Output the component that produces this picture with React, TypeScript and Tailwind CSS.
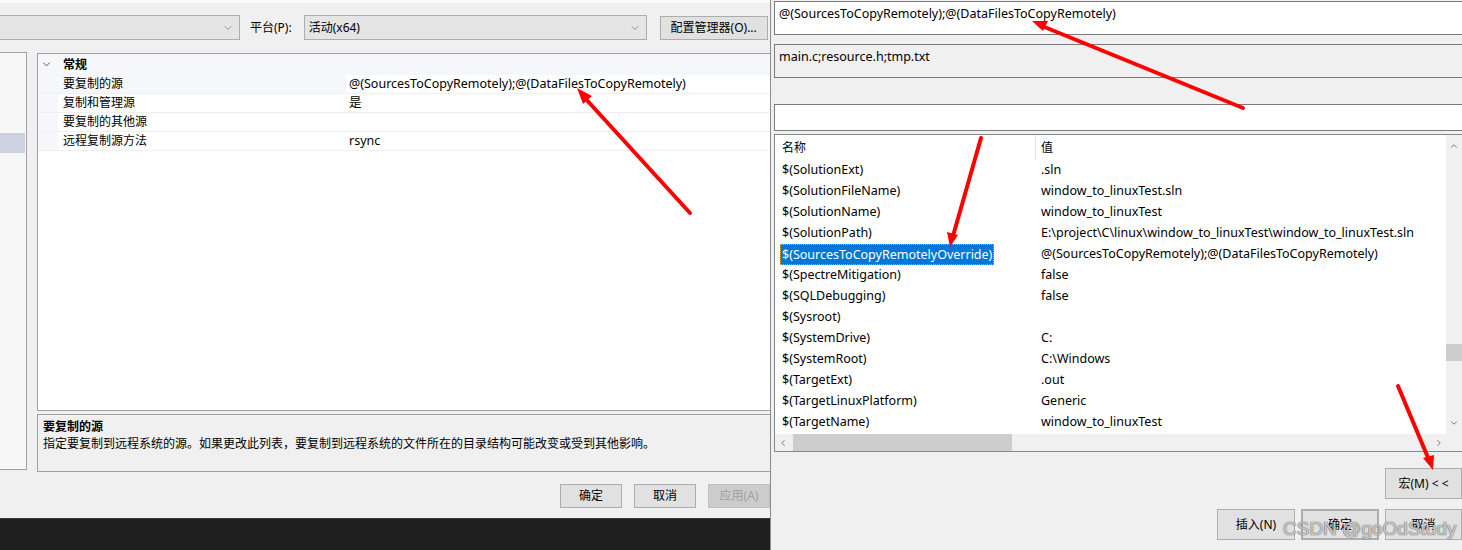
import { ChevronDown, ChevronUp, ChevronLeft, ChevronRight } from "lucide-react";

const font = "font-['Noto_Sans','Noto_Sans_CJK_SC',sans-serif]";
// latin text in the dialogs runs a touch wider than the cjk glyphs
const latin = "text-[12.5px]";

const macros: { name: string; value: string }[] = [
    { name: "$(SolutionExt)", value: ".sln" },
    { name: "$(SolutionFileName)", value: "window_to_linuxTest.sln" },
    { name: "$(SolutionName)", value: "window_to_linuxTest" },
    { name: "$(SolutionPath)", value: "E:\\project\\C\\linux\\window_to_linuxTest\\window_to_linuxTest.sln" },
    { name: "$(SourcesToCopyRemotelyOverride)", value: "@(SourcesToCopyRemotely);@(DataFilesToCopyRemotely)" },
    { name: "$(SpectreMitigation)", value: "false" },
    { name: "$(SQLDebugging)", value: "false" },
    { name: "$(Sysroot)", value: "" },
    { name: "$(SystemDrive)", value: "C:" },
    { name: "$(SystemRoot)", value: "C:\\Windows" },
    { name: "$(TargetExt)", value: ".out" },
    { name: "$(TargetLinuxPlatform)", value: "Generic" },
    { name: "$(TargetName)", value: "window_to_linuxTest" },
];

const props = [
    { name: "要复制的源", value: "@(SourcesToCopyRemotely);@(DataFilesToCopyRemotely)", selected: true },
    { name: "复制和管理源", value: "是" },
    { name: "要复制的其他源", value: "" },
    { name: "远程复制源方法", value: "rsync" },
];

interface WinButtonProps {
    label: string;
    className?: string;
    disabled?: boolean;
    primary?: boolean;
}

const WinButton: React.FC<WinButtonProps> = ({ label, className, disabled, primary }) => {
    return (
        <div
            className={`flex items-center justify-center whitespace-nowrap text-[12px] ${
                primary ? "border-2 border-[#0078d7]" : "border"
            } ${disabled ? "border-[#bfbfbf] bg-[#cccccc] text-[#a0a0a0]" : "border-[#adadad] bg-[#e1e1e1] text-black"} ${className ?? ""}`}
        >
            {label}
        </div>
    );
};

const Arrows = () => (
    <svg className="pointer-events-none absolute left-0 top-0" width="1462" height="550">
        <g stroke="#ff0000" strokeWidth="4" strokeLinecap="round" fill="#ff0000">
            <line x1="690" y1="213" x2="584" y2="97" />
            <polygon points="577,88 592,96 583,104" stroke="none" />
            <line x1="1243" y1="108" x2="1042" y2="26" />
            <polygon points="1032,21 1048,21 1043,31" stroke="none" />
            <line x1="981" y1="138" x2="953" y2="236" />
            <polygon points="950,247 947,232 958,235" stroke="none" />
            <line x1="1398" y1="386" x2="1429" y2="460" />
            <polygon points="1433,470 1423,458 1434,455" stroke="none" />
        </g>
    </svg>
);

export default function App() {
    return (
        <div className={`relative flex h-[550px] w-[1462px] overflow-hidden bg-[#f0f0f0] text-[12px] text-black ${font}`}>
            {/* left: property pages */}
            <div className="flex h-full w-[770px] shrink-0 flex-col">
                <div className="h-[3px] bg-[#f9f9f9]"></div>
                <div className="mt-[12px] flex h-[25px] items-center">
                    <div className="flex h-[25px] w-[240px] items-center justify-end border border-l-0 border-[#adadad] bg-[#e5e5e5] pr-[5px]">
                        <ChevronDown size={12} strokeWidth={1.2} className="text-[#555]" />
                    </div>
                    <span className="ml-[10px]">平台(P):</span>
                    <div className="ml-[12px] flex h-[25px] w-[343px] items-center justify-between border border-[#adadad] bg-[#e5e5e5] pl-[4px] pr-[5px]">
                        <span>活动(x64)</span>
                        <ChevronDown size={12} strokeWidth={1.2} className="text-[#555]" />
                    </div>
                    <WinButton label="配置管理器(O)..." className="ml-[13px] h-[24px] w-[108px]" />
                </div>

                <div className="mt-[12px] flex">
                    <div className="h-[418px] w-[27px] border border-l-0 border-[#a0a0a0] bg-[#f7f7f7] pt-[80px]">
                        <div className="h-[20px] w-[25px] bg-[#cdd2de]"></div>
                    </div>
                    <div className="ml-[10px] flex flex-1 flex-col">
                        <div className="mt-[1px] h-[358px] border border-r-0 border-[#a0a0a0] bg-white">
                            <div className="flex h-[21px] items-center bg-[#f5f7fa]">
                                <div className="flex w-[16px] justify-center">
                                    <ChevronDown size={11} strokeWidth={2} className="text-[#444]" />
                                </div>
                                <span className="ml-[9px] font-bold">常规</span>
                            </div>
                            {props.map((p) => (
                                <div key={p.name} className="flex h-[19px] items-center border-b border-[#f0f0f0]">
                                    <div className="h-full w-[20px] bg-[#f5f7fa]"></div>
                                    <div className={`flex h-full w-[288px] items-center pl-[5px] ${p.selected ? "bg-[#f5f7fa]" : "bg-white"}`}>
                                        {p.name}
                                    </div>
                                    <div className={`flex h-full flex-1 items-center pl-[3px] ${latin}`}>{p.value}</div>
                                </div>
                            ))}
                        </div>
                        <div className="mt-[3px] h-[58px] border border-r-0 border-[#a0a0a0] bg-[#f0f0f0] pl-[5px] pt-[3px] leading-[17px]">
                            <div className="font-bold">要复制的源</div>
                            <div>指定要复制到远程系统的源。如果更改此列表，要复制到远程系统的文件所在的目录结构可能改变或受到其他影响。</div>
                        </div>
                    </div>
                </div>

                <div className="mt-[12px] flex h-[24px] pl-[560px]">
                    <WinButton label="确定" className="h-[24px] w-[62px]" />
                    <WinButton label="取消" className="ml-[12px] h-[24px] w-[62px]" />
                    <WinButton label="应用(A)" className="ml-[12px] h-[24px] w-[62px]" disabled />
                </div>

                <div className="mt-auto h-[32px] border-t border-[#3a3a3a] bg-[#1f1f1f]"></div>
            </div>

            {/* right: macro editor */}
            <div className="flex h-full flex-1 flex-col border-l border-[#8c8c8c] bg-[#f0f0f0] pl-[3px]">
                <div className={`mt-[1px] h-[34px] border border-r-0 border-[#7a7a7a] bg-white pl-[4px] pt-[3px] ${latin}`}>
                    @(SourcesToCopyRemotely);@(DataFilesToCopyRemotely)
                </div>
                <div className={`mt-[9px] h-[34px] border border-r-0 border-[#7a7a7a] bg-[#f0f0f0] pl-[4px] pt-[3px] ${latin}`}>
                    main.c;resource.h;tmp.txt
                </div>
                <div className="mt-[26px] h-[27px] border border-r-0 border-[#7a7a7a] bg-white"></div>

                <div className="mt-[3px] flex h-[318px] flex-col border border-r-0 border-[#828790] bg-white">
                    <div className="flex min-h-0 flex-1">
                        <div className="flex-1 overflow-hidden">
                            <div className="flex h-[25px] items-center">
                                <div className="w-[260px] pl-[7px]">名称</div>
                                <div className="h-full w-px bg-[#e5e5e5]"></div>
                                <div className="pl-[5px]">值</div>
                            </div>
                            {macros.map((m, i) => (
                                <div key={m.name} className={`flex h-[21px] items-center whitespace-nowrap ${latin}`}>
                                    <div className="w-[261px] pl-[5px]">
                                        {i === 4 ? (
                                            <span className="inline-block border border-dotted border-[#f5a623] bg-[#0078d7] px-[1px] leading-[19px] text-white">
                                                {m.name}
                                            </span>
                                        ) : (
                                            <span className="pl-[2px]">{m.name}</span>
                                        )}
                                    </div>
                                    <div className="pl-[5px]">{m.value}</div>
                                </div>
                            ))}
                        </div>
                        <div className="flex w-[16px] flex-col items-center bg-[#f0f0f0]">
                            <ChevronUp size={10} strokeWidth={2} className="mt-[6px] text-[#606060]" />
                            <div className="mt-[193px] h-[17px] w-[16px] bg-[#cdcdcd]"></div>
                            <div className="flex-1"></div>
                            <ChevronDown size={10} strokeWidth={2} className="mb-[6px] text-[#606060]" />
                        </div>
                    </div>
                    <div className="flex h-[17px] items-center bg-[#f0f0f0]">
                        <ChevronLeft size={10} strokeWidth={2} className="ml-[3px] text-[#606060]" />
                        <div className="ml-[5px] h-[17px] w-[219px] bg-[#cdcdcd]"></div>
                        <div className="flex-1"></div>
                        <ChevronRight size={10} strokeWidth={2} className="mr-[18px] text-[#606060]" />
                    </div>
                </div>

                <div className="mt-[16px] flex justify-end">
                    <WinButton label="宏(M) < <" className="h-[31px] w-[77px]" />
                </div>
                <div className="mt-[10px] flex justify-end gap-[6px]">
                    <WinButton label="插入(N)" className="h-[31px] w-[78px]" />
                    <WinButton label="确定" className="h-[31px] w-[78px]" primary />
                    <WinButton label="取消" className="h-[31px] w-[77px]" />
                </div>
            </div>

            <Arrows />
            <div className="pointer-events-none absolute left-[1283px] top-[517px] whitespace-nowrap font-['Liberation_Sans',sans-serif] text-[19px] leading-[24px] text-white/70 [text-shadow:0_0_1px_#555,0_0_1px_#555]">
                CSDN @goOdStudy
            </div>
        </div>
    );
}
